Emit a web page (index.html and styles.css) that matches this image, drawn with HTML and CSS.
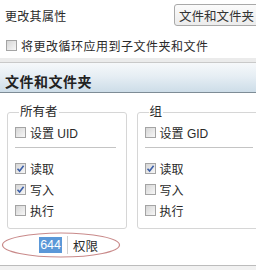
FILE: index.html
```html
<!DOCTYPE html>
<html lang="zh-CN">
<head>
  <meta charset="UTF-8" />
  <title>属性</title>
  <link rel="stylesheet" href="styles.css">
</head>
<body>

  <div class="page">
    <div class="top-row">
      <span class="label">更改其属性</span>
      <button class="target-btn">文件和文件夹</button>
    </div>

    <div class="check-row recurse">
      <span class="box"></span>
      <span>将更改循环应用到子文件夹和文件</span>
    </div>

    <div class="divider"></div>

    <div class="band">文件和文件夹</div>

    <div class="groups">
      <fieldset class="group">
        <legend>所有者</legend>
        <div class="check-row"><span class="box"></span><span>设置 UID</span></div>
        <div class="rule"></div>
        <div class="check-row"><span class="box checked"><svg viewBox="0 0 9 9"><path d="M1.5 4.8 L3.6 7 L7.6 1.8" /></svg></span><span>读取</span></div>
        <div class="check-row"><span class="box checked"><svg viewBox="0 0 9 9"><path d="M1.5 4.8 L3.6 7 L7.6 1.8" /></svg></span><span>写入</span></div>
        <div class="check-row"><span class="box"></span><span>执行</span></div>
      </fieldset>

      <fieldset class="group">
        <legend>组</legend>
        <div class="check-row"><span class="box"></span><span>设置 GID</span></div>
        <div class="rule"></div>
        <div class="check-row"><span class="box checked"><svg viewBox="0 0 9 9"><path d="M1.5 4.8 L3.6 7 L7.6 1.8" /></svg></span><span>读取</span></div>
        <div class="check-row"><span class="box"></span><span>写入</span></div>
        <div class="check-row"><span class="box"></span><span>执行</span></div>
      </fieldset>
    </div>

    <div class="perm-row">
      <div class="perm-input"><span class="sel">644</span></div>
      <span>权限</span>
      <svg class="oval" viewBox="0 0 120 26"><ellipse cx="60" cy="13" rx="58.5" ry="12" /></svg>
    </div>

    <div class="footer-line"></div>
  </div>

</body>
</html>
```

FILE: styles.css
```css
* {
  box-sizing: border-box;
  margin: 0;
  padding: 0;
}

html, body {
  overflow: hidden;
}

body {
  background-color: #fff;
  color: #2a2a2a;
  font-family: "Liberation Sans", "Noto Sans CJK SC", sans-serif;
  font-size: 12px;
  width: 256px;
  height: 270px;
}

.page {
  width: 264px;
}

.top-row {
  display: flex;
  align-items: center;
  justify-content: space-between;
  height: 30px;
  padding: 4px 0 4px 5px;
}

.label {
  letter-spacing: 0.3px;
}

.target-btn {
  height: 22px;
  width: 90px;
  padding: 0 4px;
  text-align: left;
  font-family: inherit;
  font-size: 12.5px;
  color: #333;
  background: linear-gradient(#fbfbfb, #ececec);
  border: 1px solid #a9a9a9;
  border-radius: 3px;
}

.check-row {
  display: flex;
  align-items: center;
  gap: 4px;
  height: 21px;
}

.recurse {
  padding-left: 6px;
  margin-top: 5px;
  letter-spacing: 0.5px;
}

.box {
  display: inline-flex;
  align-items: center;
  justify-content: center;
  width: 11px;
  height: 11px;
  border: 1px solid #a4a4a4;
  background: linear-gradient(135deg, #d6d6d6, #f7f7f7);
  flex-shrink: 0;
}

.box svg {
  width: 9px;
  height: 9px;
  fill: none;
  stroke: #3c5fa8;
  stroke-width: 1.6;
}

.divider {
  height: 5px;
  margin-top: 2px;
  background: #ebebeb;
  border-bottom: 1px solid #c9c9c9;
}

.band {
  height: 30px;
  padding: 8px 0 0 5px;
  font-weight: bold;
  font-size: 14px;
  color: #222;
  letter-spacing: 0.5px;
  background: linear-gradient(#f6f8fa, #e6eef4 45%, #cddde8);
  border-bottom: 1px solid #7e8c96;
}

.groups {
  display: flex;
  gap: 10px;
  padding: 13px 0 0 7px;
}

.group {
  width: 122px;
  height: 123px;
  border: 1px solid #d6d6d6;
  border-radius: 3px;
  padding: 3px 8px 0 7px;
}

.group + .group {
  width: 130px;
}

.group legend {
  padding: 0 1px;
  margin-left: 4px;
  font-size: 12.5px;
  line-height: 13px;
}

.rule {
  height: 1px;
  background: #c4c4c4;
  margin: 4px 2px 10px 0;
}

.perm-row {
  position: relative;
  display: flex;
  align-items: center;
  gap: 5px;
  height: 30px;
  margin-top: 1px;
  padding-left: 8px;
  font-size: 12.5px;
}

.perm-input {
  width: 60px;
  height: 18px;
  display: flex;
  align-items: center;
  justify-content: flex-end;
  padding-right: 5px;
  background: #fff;
  border-right: 1px solid #d0d0d0;
}

.sel {
  background: #5b98d8;
  color: #fff;
  padding: 1px 1px;
  line-height: 14px;
}

.oval {
  position: absolute;
  left: 1px;
  top: 2px;
  width: 120px;
  height: 26px;
  fill: none;
  stroke: #c98a8a;
  stroke-width: 1.2;
}

.footer-line {
  margin-top: 5px;
  height: 6px;
  border-top: 1px solid #bcbcbc;
  background: #f1f1f1;
}
```
